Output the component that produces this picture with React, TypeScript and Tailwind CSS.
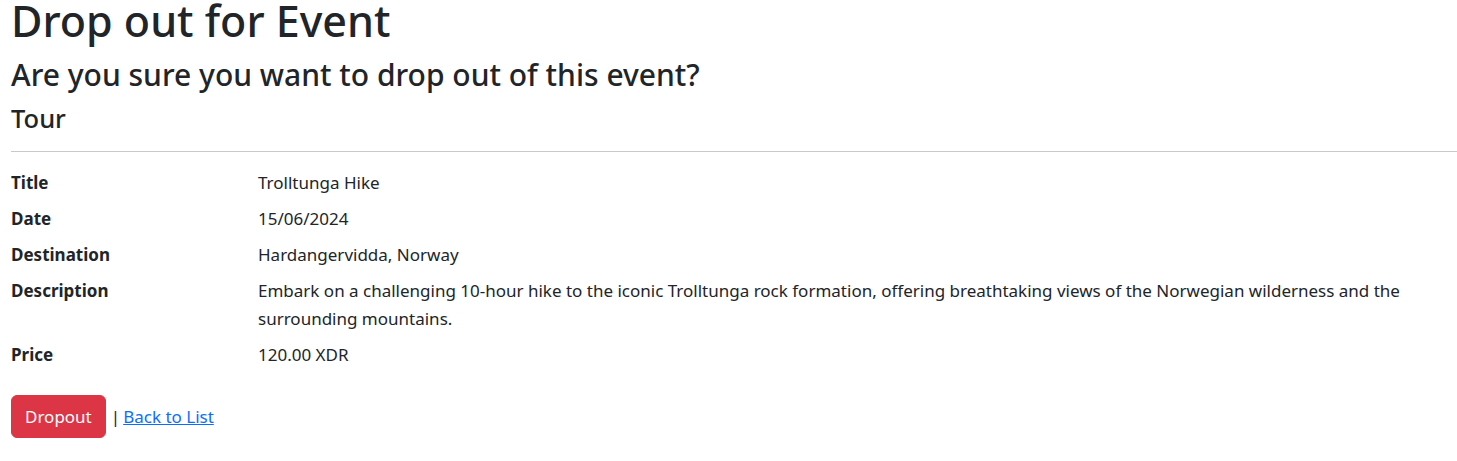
import React from 'react';

const fields = [
  { label: 'Title', value: 'Trolltunga Hike' },
  { label: 'Date', value: '15/06/2024' },
  { label: 'Destination', value: 'Hardangervidda, Norway' },
  {
    label: 'Description',
    value:
      'Embark on a challenging 10-hour hike to the iconic Trolltunga rock formation, offering breathtaking views of the Norwegian wilderness and the surrounding mountains.',
  },
  { label: 'Price', value: '120.00 XDR' },
];

export default function App() {
  return (
    <div className="min-h-screen bg-white pl-[11px] text-[#212529] font-['Noto_Sans',sans-serif] text-[17px] leading-[28px]">
      <h1 className="text-[43px] font-medium leading-[42px] mb-[15px]">Drop out for Event</h1>
      <h3 className="text-[30px] font-medium leading-[36px] mb-[10px]">Are you sure you want to drop out of this event?</h3>
      <div>
        <h4 className="text-[25.5px] font-medium leading-[30px]">Tour</h4>
        <hr className="mt-[18px] mb-[17px] border-0 border-t border-[#c9c9c9]" />
        <dl className="grid grid-cols-[247px_1fr]">
          {fields.map((f) => (
            <React.Fragment key={f.label}>
              <dt className="font-bold mb-2">{f.label}</dt>
              <dd className="mb-2">{f.value}</dd>
            </React.Fragment>
          ))}
        </dl>
        <form className="mt-[18px] flex items-center">
          <button
            type="button"
            className="bg-[#dc3545] text-white border border-[#dc3545] rounded-md px-[13px] py-[6px] leading-[29px]"
          >
            Dropout
          </button>
          <span className="ml-[5px] mr-[3px]">|</span>
          <a href="#" className="text-[#0d6efd] underline">
            Back to List
          </a>
        </form>
      </div>
    </div>
  );
}
